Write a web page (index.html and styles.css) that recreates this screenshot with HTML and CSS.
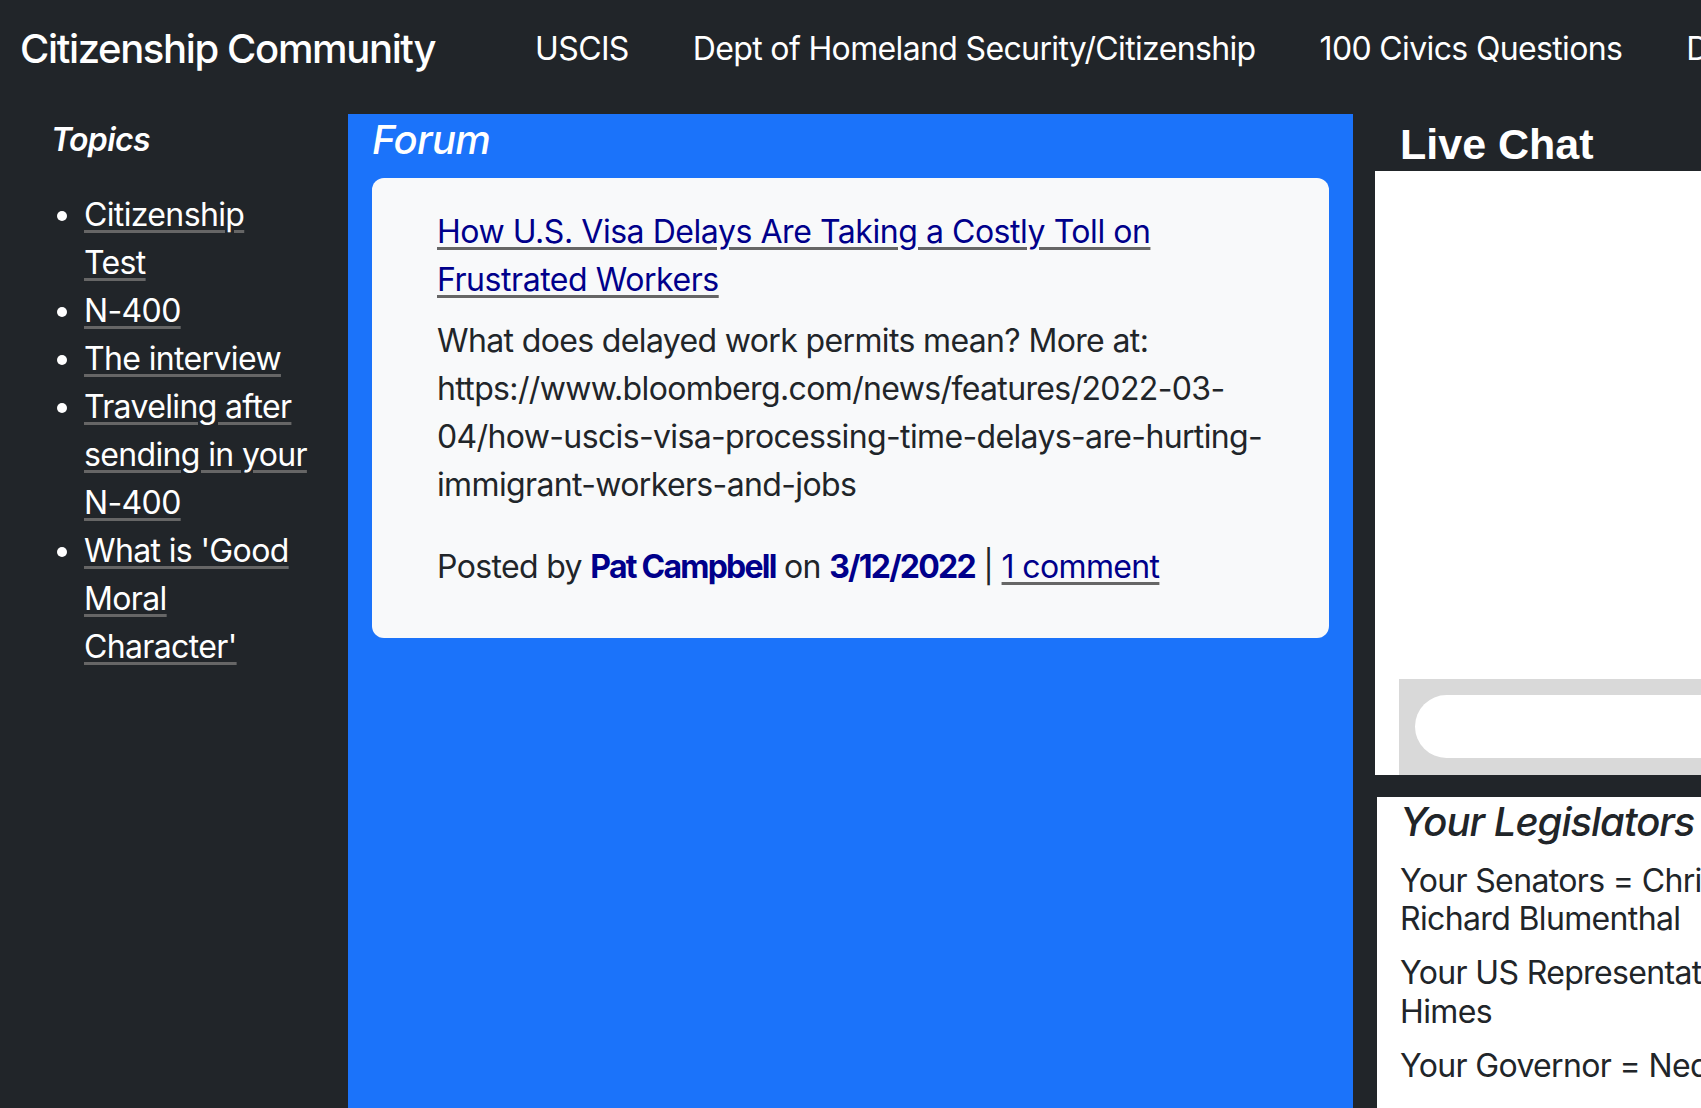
FILE: index.html
```html
<!DOCTYPE html>
<html lang="en">
<head>
<meta charset="utf-8">
<title>Citizenship Community</title>
<link rel="stylesheet" href="styles.css">
</head>
<body>
<header class="navbar">
  <a class="brand" href="#">Citizenship Community</a>
  <ul class="nav">
    <li><a href="#">USCIS</a></li>
    <li><a href="#">Dept of Homeland Security/Citizenship</a></li>
    <li><a href="#">100 Civics Questions</a></li>
    <li><a href="#">Donate</a></li>
  </ul>
</header>
<main class="layout">
  <aside class="topics">
    <h5 class="topics-title">Topics</h5>
    <ul class="topic-list">
      <li><a href="#">Citizenship Test</a></li>
      <li><a href="#">N-400</a></li>
      <li><a href="#">The interview</a></li>
      <li><a href="#">Traveling after sending in your N-400</a></li>
      <li><a href="#">What is 'Good Moral Character'</a></li>
    </ul>
  </aside>
  <section class="forum">
    <h5 class="forum-title">Forum</h5>
    <article class="post">
      <h5 class="post-title"><a href="#">How U.S. Visa Delays Are Taking a Costly Toll on Frustrated Workers</a></h5>
      <p class="post-body">What does delayed work permits mean? More at: https://www.bloomberg.com/news/features/2022-03-04/how-uscis-visa-processing-time-delays-are-hurting-immigrant-workers-and-jobs</p>
      <p class="post-meta">Posted by <b class="strong-link">Pat Campbell</b> on <b class="strong-link">3/12/2022</b> | <a href="#">1 comment</a></p>
    </article>
  </section>
  <aside class="side">
    <h3 class="chat-title">Live Chat</h3>
    <div class="chat">
      <div class="chat-messages"></div>
      <div class="chat-bar"><div class="chat-input"></div></div>
    </div>
    <div class="legislators">
      <h5 class="leg-title">Your Legislators</h5>
      <p>Your Senators = Chris Murphy and Richard Blumenthal</p>
      <p>Your US Representative = Jim Himes</p>
      <p>Your Governor = Ned Lamont</p>
    </div>
  </aside>
</main>
</body>
</html>
```

FILE: styles.css
```css
* { box-sizing: border-box; }

html, body {
  margin: 0;
  padding: 0;
}

body {
  background: #212529;
  color: #212529;
  font-family: Inter, "Liberation Sans", Arial, sans-serif;
  font-size: 32px;
  line-height: 48px;
  letter-spacing: -0.02em;
  width: 1701px;
  height: 1108px;
  overflow: hidden;
}

/* NAVBAR */
.navbar {
  height: 114px;
  display: flex;
  align-items: center;
  padding: 0 0 17px 20px;
  white-space: nowrap;
  overflow: hidden;
}

.brand {
  color: #fff;
  text-decoration: none;
  font-size: 40px;
  font-weight: 500;
  line-height: 56px;
  letter-spacing: -0.034em;
}

.nav {
  display: flex;
  gap: 64px;
  list-style: none;
  margin: 0 0 0 100px;
  padding: 0;
}

.nav a {
  color: #fff;
  text-decoration: none;
  font-size: 32px;
}

/* LAYOUT */
.layout {
  display: grid;
  grid-template-columns: 348px 1005px 348px;
  height: 994px;
}

/* TOPICS SIDEBAR */
.topics {
  padding: 7px 0 0 20px;
}

.topics-title {
  margin: 0 0 32px 31px;
  font-size: 32px;
  line-height: 38.4px;
  font-style: italic;
  font-weight: 600;
  color: #fff;
}

.topic-list {
  margin: 0;
  padding: 0 0 0 64px;
  width: 290px;
  color: #fff;
}

.topic-list a,
.post a {
  text-decoration: underline;
  text-decoration-color: #666;
  text-decoration-thickness: 3px;
  text-underline-offset: 4px;
}

.topic-list a {
  color: #fff;
}

/* FORUM */
.forum {
  background: #1b73fa;
  padding: 2px 24px 0;
}

.forum-title {
  margin: 0 0 14px;
  font-size: 40px;
  line-height: 48px;
  font-style: italic;
  font-weight: 500;
  color: #fff;
}

.post {
  background: #f8f9fa;
  border-radius: 12px;
  padding: 30px 65px 47px;
}

.post-title {
  margin: 0 0 13px;
  font-size: 32px;
  line-height: 48px;
  font-weight: 400;
  letter-spacing: -0.014em;
}

.post a,
.strong-link {
  color: #00008b;
}

.post-body {
  margin: 0 0 34px;
  overflow-wrap: break-word;
}

.post-meta {
  margin: 0;
}

.strong-link {
  font-weight: 700;
  letter-spacing: -0.055em;
}

/* RIGHT SIDE */
.side {
  padding: 5px 0 0 22px;
  min-width: 0;
}

.chat-title {
  margin: 0 0 0 25px;
  font-family: "Liberation Sans", Arial, sans-serif;
  font-size: 43px;
  line-height: 51.6px;
  font-weight: 700;
  letter-spacing: 0;
  color: #fff;
}

.chat {
  width: 560px;
  height: 604px;
  background: #fff;
  display: flex;
  flex-direction: column;
}

.chat-messages {
  flex: 1;
}

.chat-bar {
  margin-left: 24px;
  height: 96px;
  background: #d9d9d9;
  padding: 16px 0 17px 16px;
}

.chat-input {
  height: 63px;
  background: #fff;
  border-radius: 32px;
}

.legislators {
  width: 560px;
  margin: 22px 0 0 2px;
  background: #fff;
  padding: 1px 24px 20px 23px;
  height: 400px;
}

.leg-title {
  margin: 0 0 16px;
  font-size: 40px;
  line-height: 48px;
  font-style: italic;
  font-weight: 500;
  letter-spacing: -0.025em;
}

.legislators p {
  margin: 0 0 16px;
  line-height: 38.4px;
}
```
